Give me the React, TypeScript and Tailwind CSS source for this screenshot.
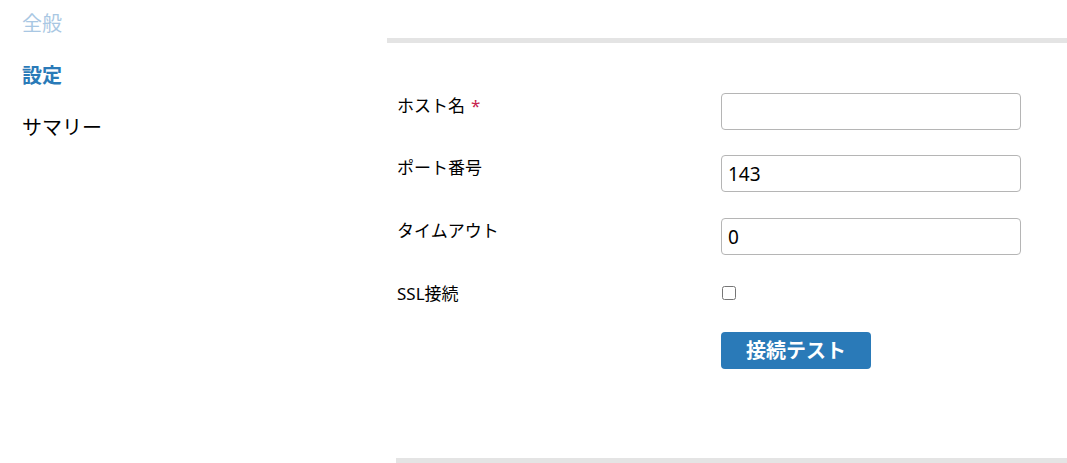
import React from "react";

const font = { fontFamily: '"Noto Sans", "Noto Sans CJK JP", sans-serif' };

function Row({ label, required, children, h }: { label: string; required?: boolean; children: React.ReactNode; h: string }) {
  return (
    <div className={`flex items-start ${h}`}>
      <div className="w-[324px] shrink-0 text-[17px] leading-[26px] text-black">
        {label}
        {required && <span className="ml-[6px] text-[#c7254e]">*</span>}
      </div>
      <div>{children}</div>
    </div>
  );
}

export default function App() {
  return (
    <div className="flex w-[1067px] h-[463px] overflow-hidden bg-white" style={font}>
      <div className="w-[387px] shrink-0 pl-[22px] pt-[10px] flex flex-col gap-[24px] text-[20px] leading-[28px]">
        <div className="text-[#a9c7e3]">全般</div>
        <div className="font-bold text-[#2a7ab8]">設定</div>
        <div className="text-black">サマリー</div>
      </div>
      <div className="flex-1 flex flex-col pt-[38px]">
        <div className="h-[5px] bg-[#e4e4e4]" />
        <div className="pl-[10px] pt-[50px] flex flex-col">
          <Row label="ホスト名" required h="h-[62px]">
            <input className="w-[300px] h-[37px] border border-[#b5b5b5] rounded-[4px] px-[6px] text-[19px] outline-none" />
          </Row>
          <Row label="ポート番号" h="h-[63px]">
            <input defaultValue="143" className="w-[300px] h-[37px] border border-[#b5b5b5] rounded-[4px] px-[6px] text-[19px] text-black outline-none" />
          </Row>
          <Row label="タイムアウト" h="h-[62px]">
            <input defaultValue="0" className="w-[300px] h-[37px] border border-[#b5b5b5] rounded-[4px] px-[6px] text-[19px] text-black outline-none" />
          </Row>
          <div className="flex items-start h-[52px] pt-[1px]">
            <div className="w-[324px] shrink-0 text-[17px] leading-[26px] text-black">SSL接続</div>
            <div className="pt-[5px] pl-[1px]">
              <input type="checkbox" className="w-[14px] h-[14px] m-0 block" />
            </div>
          </div>
          <div className="flex">
            <div className="w-[324px] shrink-0" />
            <button className="w-[150px] h-[37px] rounded-[4px] bg-[#2a7ab8] text-white text-[20px] leading-[28px] font-semibold">
              接続テスト
            </button>
          </div>
        </div>
        <div className="flex-1" />
        <div className="ml-[9px] h-[5px] bg-[#e4e4e4]" />
      </div>
    </div>
  );
}
